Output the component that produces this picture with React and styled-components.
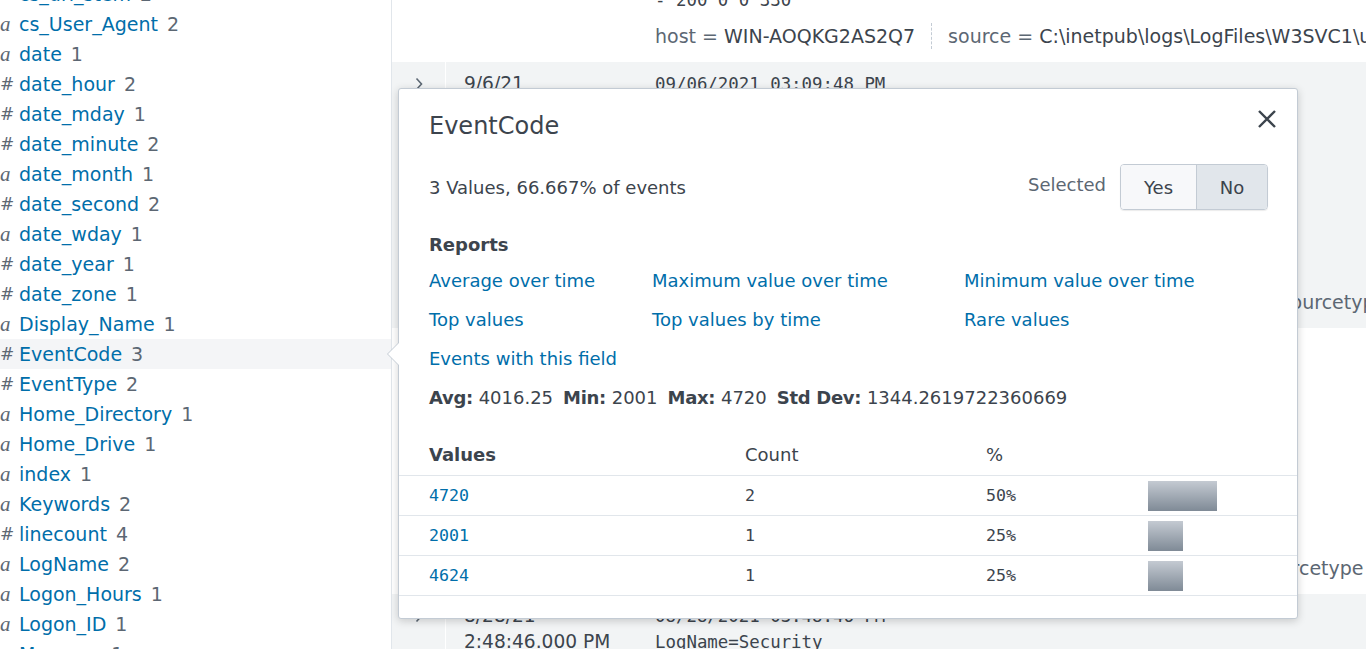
import React from "react";
import styled, { createGlobalStyle } from "styled-components";

const GlobalStyle = createGlobalStyle`
  * { box-sizing: border-box; }
  html, body { margin: 0; padding: 0; }
  body {
    font-family: "DejaVu Sans", "Open Sans", sans-serif;
    color: #3c444d;
    background: #fff;
    overflow: hidden;
  }
`;

const FIELDS = [
  ["#", "cs_uri_stem", 2],
  ["a", "cs_User_Agent", 2],
  ["a", "date", 1],
  ["#", "date_hour", 2],
  ["#", "date_mday", 1],
  ["#", "date_minute", 2],
  ["a", "date_month", 1],
  ["#", "date_second", 2],
  ["a", "date_wday", 1],
  ["#", "date_year", 1],
  ["#", "date_zone", 1],
  ["a", "Display_Name", 1],
  ["#", "EventCode", 3],
  ["#", "EventType", 2],
  ["a", "Home_Directory", 1],
  ["a", "Home_Drive", 1],
  ["a", "index", 1],
  ["a", "Keywords", 2],
  ["#", "linecount", 4],
  ["a", "LogName", 2],
  ["a", "Logon_Hours", 1],
  ["a", "Logon_ID", 1],
  ["a", "Message", 1],
];

const EVENTS = [
  {
    time: [],
    lines: ["- 200 0 0 330"],
    fields: [
      ["host", "WIN-AOQKG2AS2Q7"],
      ["source", "C:\\inetpub\\logs\\LogFiles\\W3SVC1\\u_ex210906.log"],
    ],
  },
  {
    shaded: true,
    time: ["9/6/21", "3:09:48.000 PM"],
    lines: [
      "09/06/2021 03:09:48 PM",
      "LogName=Security",
      "EventCode=4720",
      "EventType=0",
      "ComputerName=WIN-AOQKG2AS2Q7",
      "SourceName=Microsoft Windows security auditing.",
      "Type=Information",
      "RecordNumber=2140",
    ],
    fields: [
      ["host", "WIN-AOQKG2AS2Q7"],
      ["source", "WinEventLog:Security"],
      ["sourcetype", "WinEventLog:Security"],
    ],
  },
  {
    time: ["9/6/21", "3:09:48.000 PM"],
    lines: [
      "09/06/2021 03:09:48 PM",
      "LogName=Setup",
      "EventCode=2001",
      "EventType=0",
      "ComputerName=WIN-AOQKG2AS2Q7",
      "SourceName=Microsoft-Windows-Servicing",
      "Type=Information",
      "RecordNumber=139",
    ],
    fields: [
      ["host", "WIN-AOQKG2AS2Q7"],
      ["source", "WinEventLog:Setup"],
      ["sourcetype", "WinEventLog:Setup"],
    ],
  },
  {
    shaded: true,
    time: ["8/28/21", "2:48:46.000 PM"],
    lines: ["08/28/2021 03:48:46 PM", "LogName=Security", "EventCode=4624"],
    fields: [],
  },
];

const REPORTS = [
  "Average over time",
  "Maximum value over time",
  "Minimum value over time",
  "Top values",
  "Top values by time",
  "Rare values",
  "Events with this field",
];

const STATS = [
  ["Avg:", "4016.25"],
  ["Min:", "2001"],
  ["Max:", "4720"],
  ["Std Dev:", "1344.2619722360669"],
];

const VALUES = [
  ["4720", 2, 50],
  ["2001", 1, 25],
  ["4624", 1, 25],
];

const Chevron = () => (
  <svg width="10" height="14" viewBox="0 0 10 14">
    <path d="M2.5 1.5 L7.5 7 L2.5 12.5" fill="none" stroke="#5c6773" strokeWidth="1.6" />
  </svg>
);

const CloseIcon = () => (
  <svg width="20" height="20" viewBox="0 0 20 20">
    <path d="M2 2 L18 18 M18 2 L2 18" fill="none" stroke="#3c444d" strokeWidth="2.4" />
  </svg>
);

const App = () => {
  return (
    <Page>
      <GlobalStyle />
      <Sidebar>
        <FieldList>
          {FIELDS.map(([kind, name, count]) => (
            <FieldRow key={name} $active={name === "EventCode"}>
              <TypeIcon $kind={kind}>{kind}</TypeIcon>
              <FieldName>{name}</FieldName>
              <FieldCount>{count}</FieldCount>
            </FieldRow>
          ))}
        </FieldList>
      </Sidebar>

      <Main>
        <EventList>
          {EVENTS.map((ev, i) => (
            <EventRow key={i} $shaded={ev.shaded}>
              <ExpandCell>{ev.time.length > 0 && <Chevron />}</ExpandCell>
              <TimeCell>
                {ev.time.map((t) => (
                  <Line key={t}>{t}</Line>
                ))}
              </TimeCell>
              <EventCell>
                {ev.lines.map((l, j) => (
                  <RawLine key={j}>{l}</RawLine>
                ))}
                {ev.fields.length > 0 && (
                  <FieldLine>
                    {ev.fields.map(([k, v]) => (
                      <FieldPair key={k}>
                        <FieldKey>{k} =</FieldKey> <FieldValue>{v}</FieldValue>
                      </FieldPair>
                    ))}
                  </FieldLine>
                )}
              </EventCell>
            </EventRow>
          ))}
        </EventList>
      </Main>

      <Popover>
        <PopHeader>
          <PopTitle>EventCode</PopTitle>
          <CloseButton>
            <CloseIcon />
          </CloseButton>
        </PopHeader>

        <Summary>
          <span>3 Values, 66.667% of events</span>
          <SelectedWrap>
            <SelectedLabel>Selected</SelectedLabel>
            <ToggleGroup>
              <ToggleBtn $w={75}>Yes</ToggleBtn>
              <ToggleBtn $w={71} $on>
                No
              </ToggleBtn>
            </ToggleGroup>
          </SelectedWrap>
        </Summary>

        <Section>
          <SectionTitle>Reports</SectionTitle>
          <ReportGrid>
            {REPORTS.map((r) => (
              <ReportLink key={r}>{r}</ReportLink>
            ))}
          </ReportGrid>
          <Stats>
            {STATS.map(([k, v]) => (
              <Stat key={k}>
                <b>{k}</b> {v}
              </Stat>
            ))}
          </Stats>
        </Section>

        <ValueTable>
          <HeadRow>
            <HeadCell $bold>Values</HeadCell>
            <HeadCell>Count</HeadCell>
            <HeadCell>%</HeadCell>
            <HeadCell />
          </HeadRow>
          {VALUES.map(([v, c, pct]) => (
            <ValueRow key={v}>
              <ValueCell>{v}</ValueCell>
              <MonoCell>{c}</MonoCell>
              <MonoCell>{pct}%</MonoCell>
              <BarCell>
                <Bar style={{ width: `${(pct / 100) * 138}px` }} />
              </BarCell>
            </ValueRow>
          ))}
        </ValueTable>
      </Popover>
    </Page>
  );
};

const Page = styled.div`
  position: relative;
  display: flex;
  width: 1366px;
  height: 649px;
  overflow: hidden;
`;

const Sidebar = styled.div`
  width: 392px;
  flex-shrink: 0;
  height: 100%;
  overflow: hidden;
  border-right: 1px solid #e1e6eb;
`;

const FieldList = styled.ul`
  list-style: none;
  margin: -21px 0 0;
  padding: 0;
`;

const FieldRow = styled.li`
  display: flex;
  align-items: center;
  height: 30px;
  font-size: 19px;
  background: ${(p) => (p.$active ? "#f4f5f7" : "transparent")};
`;

const TypeIcon = styled.span`
  width: 19px;
  flex-shrink: 0;
  color: #5c6773;
  font-family: ${(p) =>
    p.$kind === "a" ? '"Liberation Serif", serif' : '"DejaVu Sans", sans-serif'};
  font-style: ${(p) => (p.$kind === "a" ? "italic" : "normal")};
  font-size: ${(p) => (p.$kind === "a" ? "21px" : "17px")};
`;

const FieldName = styled.span`
  color: #006eaa;
`;

const FieldCount = styled.span`
  color: #5c6773;
  margin-left: 9px;
`;

const Main = styled.div`
  flex: 1;
  height: 100%;
  overflow: hidden;
`;

const EventList = styled.div`
  margin-top: -22px;
`;

const EventRow = styled.div`
  display: grid;
  grid-template-columns: 54px 209px 1fr;
  background: ${(p) => (p.$shaded ? "#f2f4f5" : "#fff")};
`;

const ExpandCell = styled.div`
  border-right: 1px solid #fff;
  padding-top: 15px;
  display: flex;
  justify-content: center;
  align-items: flex-start;
`;

const TimeCell = styled.div`
  padding: 9px 0 13px 18px;
  font-size: 18.6px;
  color: #3c444d;
`;

const Line = styled.div`
  height: 26px;
  line-height: 26px;
  white-space: nowrap;
`;

const EventCell = styled.div`
  padding: 9px 0 13px;
  min-width: 0;
  overflow: hidden;
`;

const RawLine = styled.div`
  height: 26px;
  line-height: 26px;
  font-family: "DejaVu Sans Mono", "Liberation Mono", monospace;
  font-size: 17.4px;
  color: #3c444d;
  white-space: nowrap;
`;

const FieldLine = styled.div`
  display: flex;
  margin-top: 10px;
  height: 26px;
  align-items: center;
  white-space: nowrap;
  font-size: 19px;
`;

const FieldPair = styled.span`
  padding: 0 16px 0 16px;
  line-height: 26px;
  border-left: 1px dashed #c3cbd4;

  &:first-child {
    padding-left: 0;
    border-left: none;
  }
`;

const FieldKey = styled.span`
  color: #5c6773;
`;

const FieldValue = styled.span`
  color: #3c444d;
`;

const Popover = styled.div`
  position: absolute;
  left: 398px;
  top: 88px;
  width: 900px;
  background: #fff;
  border: 1px solid #c3cbd4;
  border-radius: 3px;
  box-shadow: 0 2px 8px rgba(0, 0, 0, 0.18);
  padding-bottom: 22px;
  color: #3c444d;
  font-size: 18px;

  &::before,
  &::after {
    content: "";
    position: absolute;
    border-style: solid;
  }

  &::before {
    left: -12px;
    top: 253px;
    border-width: 12px 12px 12px 0;
    border-color: transparent #c3cbd4 transparent transparent;
  }

  &::after {
    left: -11px;
    top: 254px;
    border-width: 11px 11px 11px 0;
    border-color: transparent #fff transparent transparent;
  }
`;

const PopHeader = styled.div`
  display: flex;
  justify-content: space-between;
  align-items: flex-start;
  padding: 20px 20px 0 30px;
`;

const PopTitle = styled.h2`
  margin: 0;
  font-size: 24px;
  font-weight: 400;
  line-height: 34px;
  color: #3c444d;
`;

const CloseButton = styled.button`
  border: 0;
  background: transparent;
  padding: 0;
  width: 20px;
  height: 20px;
  display: flex;
  cursor: pointer;
`;

const Summary = styled.div`
  display: flex;
  justify-content: space-between;
  align-items: center;
  margin-top: 21px;
  padding: 0 29px 0 30px;
  height: 46px;
`;

const SelectedWrap = styled.div`
  display: flex;
  align-items: center;
`;

const SelectedLabel = styled.span`
  color: #5c6773;
  margin-right: 14px;
  margin-bottom: 5px;
`;

const ToggleGroup = styled.div`
  display: flex;
  height: 46px;
  border: 1px solid #c3cbd4;
  border-radius: 4px;
  overflow: hidden;
  box-shadow: 0 1px 1px rgba(0, 0, 0, 0.08);
`;

const ToggleBtn = styled.div`
  width: ${(p) => p.$w}px;
  display: flex;
  align-items: center;
  justify-content: center;
  background: ${(p) => (p.$on ? "#e1e6eb" : "#f7f8fa")};
  color: #3c444d;
  & + & {
    border-left: 1px solid #c3cbd4;
  }
`;

const Section = styled.div`
  padding: 0 30px;
`;

const SectionTitle = styled.div`
  margin-top: 22px;
  font-weight: 700;
  line-height: 26px;
`;

const ReportGrid = styled.div`
  display: grid;
  grid-template-columns: 223px 312px 1fr;
  grid-auto-rows: 39px;
  align-items: center;
  margin-top: 3px;
`;

const ReportLink = styled.a`
  color: #006eaa;
  white-space: nowrap;
`;

const Stats = styled.div`
  display: flex;
  gap: 10px;
  height: 39px;
  align-items: center;
  white-space: nowrap;
`;

const Stat = styled.span`
  b {
    font-weight: 700;
    letter-spacing: -0.3px;
  }
`;

const ValueTable = styled.div`
  margin-top: 17px;
`;

const tableCols = `
  display: grid;
  grid-template-columns: 346px 241px 162px 1fr;
  align-items: center;
  border-bottom: 1px solid #e1e6eb;
  & > *:first-child {
    padding-left: 30px;
  }
`;

const HeadRow = styled.div`
  ${tableCols}
  height: 42px;
`;

const HeadCell = styled.div`
  font-weight: ${(p) => (p.$bold ? 700 : 400)};
`;

const ValueRow = styled.div`
  ${tableCols}
  height: 40px;
`;

const ValueCell = styled.div`
  font-family: "DejaVu Sans Mono", "Liberation Mono", monospace;
  font-size: 16.6px;
  color: #006eaa;
`;

const MonoCell = styled.div`
  font-family: "DejaVu Sans Mono", "Liberation Mono", monospace;
  font-size: 16.6px;
  color: #3c444d;
`;

const BarCell = styled.div`
  display: flex;
  align-items: center;
`;

const Bar = styled.div`
  height: 30px;
  background: linear-gradient(#c4cad2, #7f8a96);
`;

export default App;
